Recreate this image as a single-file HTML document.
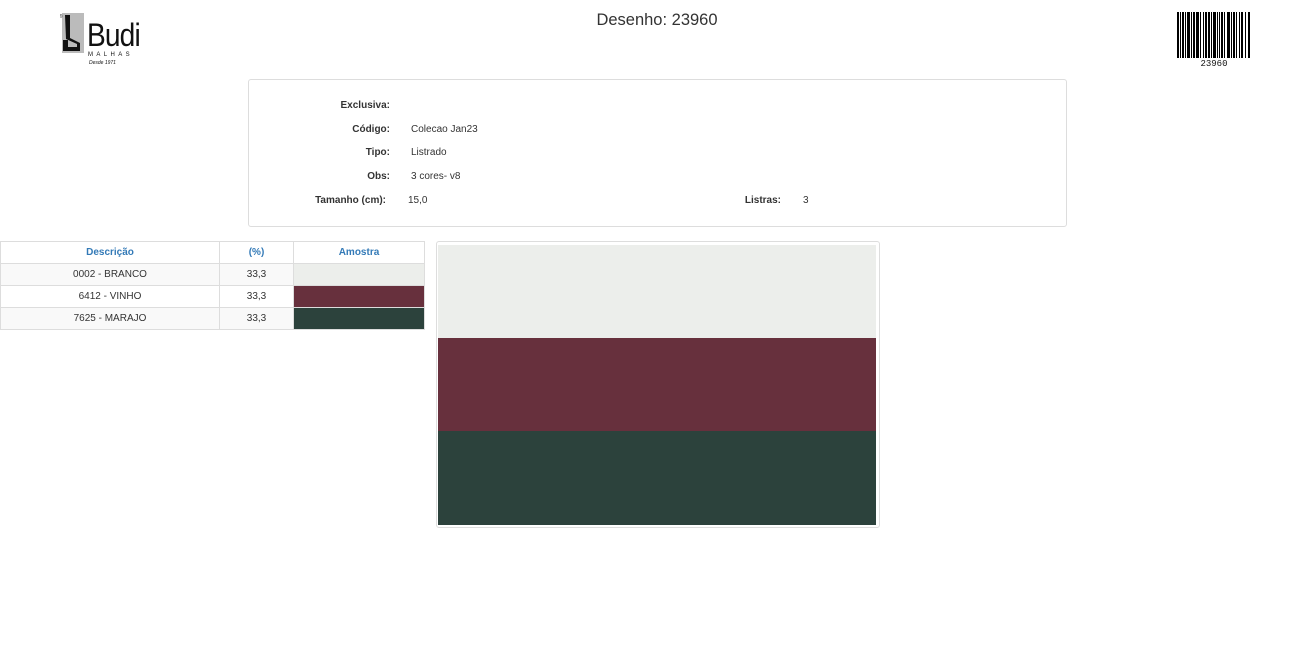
<!DOCTYPE html>
<html><head><meta charset="utf-8"><style>
*{margin:0;padding:0;box-sizing:border-box}
body{width:1310px;height:655px;background:#fff;font-family:"Liberation Sans",sans-serif;color:#333;position:relative;overflow:hidden}
.abs{position:absolute}
.lbl{position:absolute;font-size:10px;font-weight:bold;text-align:right;color:#333}
.val{position:absolute;font-size:10px;color:#333}
table{border-collapse:collapse;position:absolute;left:0;top:241px;font-size:10px;table-layout:fixed}
td,th{border:1px solid #ddd;height:22px;text-align:center;padding:0}
th{color:#337ab7;font-weight:bold}
tr.g td{background:#f9f9f9}
</style></head><body>
<!-- logo -->
<div class="abs" style="left:60px;top:13px;width:26px;height:40px">
<svg width="26" height="40"><rect x="2" y="0" width="22" height="40" fill="#bbb"/><path d="M5 2 L10 2 L10 25 L20 30 L20 38 L3 38 L3 27 L8 27 L8 34 L17 34 L17 31 L6 26 Z" fill="#111"/><text x="-1" y="5" font-size="5" fill="#333">®</text></svg></div>
<div class="abs" style="left:87px;top:17px;font-size:32px;letter-spacing:-1px;color:#111;line-height:36px;transform:scaleX(0.88);transform-origin:left">Budi</div>
<div class="abs" style="left:88px;top:52px;font-size:6px;letter-spacing:3.4px;color:#111">MALHAS</div>
<div class="abs" style="left:89px;top:60px;font-size:5px;font-style:italic;color:#111">Desde 1971</div>
<div class="abs" style="left:0;width:1314px;top:11px;text-align:center;font-size:16.5px;color:#333">Desenho: 23960</div>
<!-- barcode -->
<svg class="abs" style="left:1177px;top:12px" width="74" height="46">
<g fill="#000">
<rect x="0" width="2" height="46"/><rect x="3" width="1" height="46"/><rect x="5" width="2" height="46"/><rect x="8" width="1" height="46"/><rect x="10" width="3" height="46"/><rect x="14" width="1" height="46"/><rect x="16" width="2" height="46"/><rect x="19" width="3" height="46"/><rect x="23" width="1" height="46"/><rect x="26" width="1" height="46"/><rect x="28" width="2" height="46"/><rect x="31" width="2" height="46"/><rect x="34" width="1" height="46"/><rect x="36" width="3" height="46"/><rect x="40" width="1" height="46"/><rect x="42" width="1" height="46"/><rect x="44" width="2" height="46"/><rect x="47" width="1" height="46"/><rect x="50" width="3" height="46"/><rect x="54" width="1" height="46"/><rect x="56" width="2" height="46"/><rect x="59" width="1" height="46"/><rect x="62" width="1" height="46"/><rect x="64" width="2" height="46"/><rect x="68" width="1" height="46"/><rect x="71" width="2" height="46"/>
</g></svg>
<div class="abs" style="left:1177px;top:59px;width:74px;text-align:center;font-family:'Liberation Mono',monospace;font-size:9px;color:#111">23960</div>
<!-- info box -->
<div class="abs" style="left:248px;top:79px;width:819px;height:148px;border:1px solid #ddd;border-radius:3px"></div>
<div class="lbl" style="right:920px;top:100px">Exclusiva:</div>
<div class="lbl" style="right:920px;top:124px">Código:</div><div class="val" style="left:411px;top:124px">Colecao Jan23</div>
<div class="lbl" style="right:920px;top:147px">Tipo:</div><div class="val" style="left:411px;top:147px">Listrado</div>
<div class="lbl" style="right:920px;top:171px">Obs:</div><div class="val" style="left:411px;top:171px">3 cores- v8</div>
<div class="lbl" style="right:924px;top:195px">Tamanho (cm):</div><div class="val" style="left:408px;top:195px">15,0</div>
<div class="lbl" style="right:529px;top:195px">Listras:</div><div class="val" style="left:803px;top:195px">3</div>
<!-- table -->
<table style="width:424px">
<tr><th style="width:219px">Descrição</th><th style="width:74px">(%)</th><th style="width:131px">Amostra</th></tr>
<tr class="g"><td>0002 - BRANCO</td><td>33,3</td><td style="background:#eceeeb"></td></tr>
<tr><td>6412 - VINHO</td><td>33,3</td><td style="background:#67303d"></td></tr>
<tr class="g"><td>7625 - MARAJO</td><td>33,3</td><td style="background:#2c423c"></td></tr>
</table>
<!-- sample -->
<div class="abs" style="left:436px;top:241px;width:444px;height:287px;border:1px solid #ddd;border-radius:3px"></div>
<div class="abs" style="left:438px;top:245px;width:438px;height:93px;background:#eceeeb"></div>
<div class="abs" style="left:438px;top:338px;width:438px;height:93px;background:#67303d"></div>
<div class="abs" style="left:438px;top:431px;width:438px;height:94px;background:#2c423c"></div>
</body></html>
